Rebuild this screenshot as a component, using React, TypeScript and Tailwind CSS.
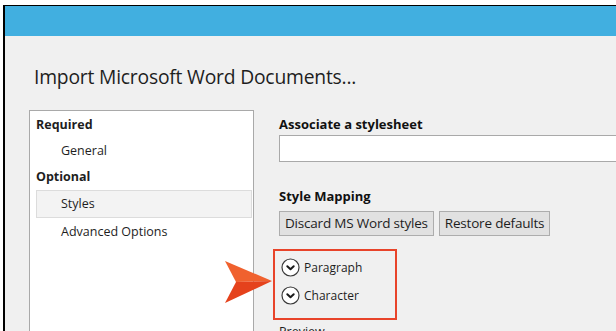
import React from "react";

function ChevronCircle() {
  return (
    <svg width="19" height="19" viewBox="0 0 19 19" className="shrink-0">
      <circle cx="9.5" cy="9.5" r="8.5" fill="#fff" stroke="#3a3a3a" strokeWidth="1.2" />
      <path d="M6.3 8.2 L9.5 11.2 L12.7 8.2" fill="none" stroke="#1a1a1a" strokeWidth="2" strokeLinecap="round" strokeLinejoin="round" />
    </svg>
  );
}

function Arrow() {
  return (
    <svg width="50" height="44" viewBox="0 0 50 44" className="absolute left-[224px] top-[260px]">
      <path d="M1 1 L48 21 L12 22 Z" fill="#f0612e" />
      <path d="M12 22 L48 21 L1 43 Z" fill="#e5421c" />
    </svg>
  );
}

export default function App() {
  return (
    <div
      className="relative w-[616px] h-[331px] overflow-hidden bg-white pl-[3px] pt-[5px]"
      style={{ fontFamily: '"Open Sans", "Noto Sans", sans-serif' }}
    >
      <div className="h-full border-l-2 border-t border-black flex flex-col bg-[#f0f0f0]">
        {/* title bar */}
        <div className="h-[30px] shrink-0 bg-[#41afe0]" />

        <div className="flex-1 pl-[29px] pt-[29px]">
          <h1 className="text-[19.3px] leading-[24px] text-[#1e1e1e] tracking-[-0.2px]">
            Import Microsoft Word Documents...
          </h1>

          <div className="mt-[21px] ml-[-5px] flex gap-[25px]">
            {/* left nav */}
            <div className="w-[225px] h-[240px] shrink-0 bg-white border border-[#a9a9a9] pl-[6px] pr-[1px] pt-[1px] text-[12.5px] text-[#1e1e1e]">
              <div className="h-[26px] flex items-center font-bold">Required</div>
              <div className="h-[26px] flex items-center pl-[25px]">General</div>
              <div className="h-[26px] flex items-center font-bold">Optional</div>
              <div className="h-[28px] flex items-center pl-[24px] bg-[#f3f3f3] border border-[#dcdcdc]">Styles</div>
              <div className="h-[28px] flex items-center pl-[25px]">Advanced Options</div>
            </div>

            {/* right content */}
            <div className="flex-1 pt-[4px]">
              <div className="text-[13px] font-bold text-[#111] leading-[20px]">Associate a stylesheet</div>
              <div className="mt-[1px] h-[27px] bg-white border border-[#a9a9a9] border-r-0" />

              <div className="mt-[24px] text-[13px] font-bold text-[#111] leading-[20px]">Style Mapping</div>
              <div className="mt-[5px] flex gap-[5px] text-[13.5px] tracking-[-0.2px] text-[#1e1e1e]">
                <button className="h-[25px] px-[5px] bg-[#e1e1e1] border border-[#adadad] leading-none">
                  Discard MS Word styles
                </button>
                <button className="h-[25px] px-[5px] bg-[#e1e1e1] border border-[#adadad] leading-none">
                  Restore defaults
                </button>
              </div>

              <div className="ml-[-6px] mt-[13px] w-[124px] h-[71px] border-2 border-[#e8442a] pl-[6px] pt-[7px] flex flex-col gap-[9px] text-[12px] text-[#1e1e1e]">
                <div className="flex items-center gap-[4px]">
                  <ChevronCircle />
                  <span>Paragraph</span>
                </div>
                <div className="flex items-center gap-[4px]">
                  <ChevronCircle />
                  <span>Character</span>
                </div>
              </div>

              <div className="mt-[3px] text-[12.5px] text-[#1e1e1e]">Preview</div>
            </div>
          </div>
        </div>
      </div>
      <Arrow />
    </div>
  );
}
